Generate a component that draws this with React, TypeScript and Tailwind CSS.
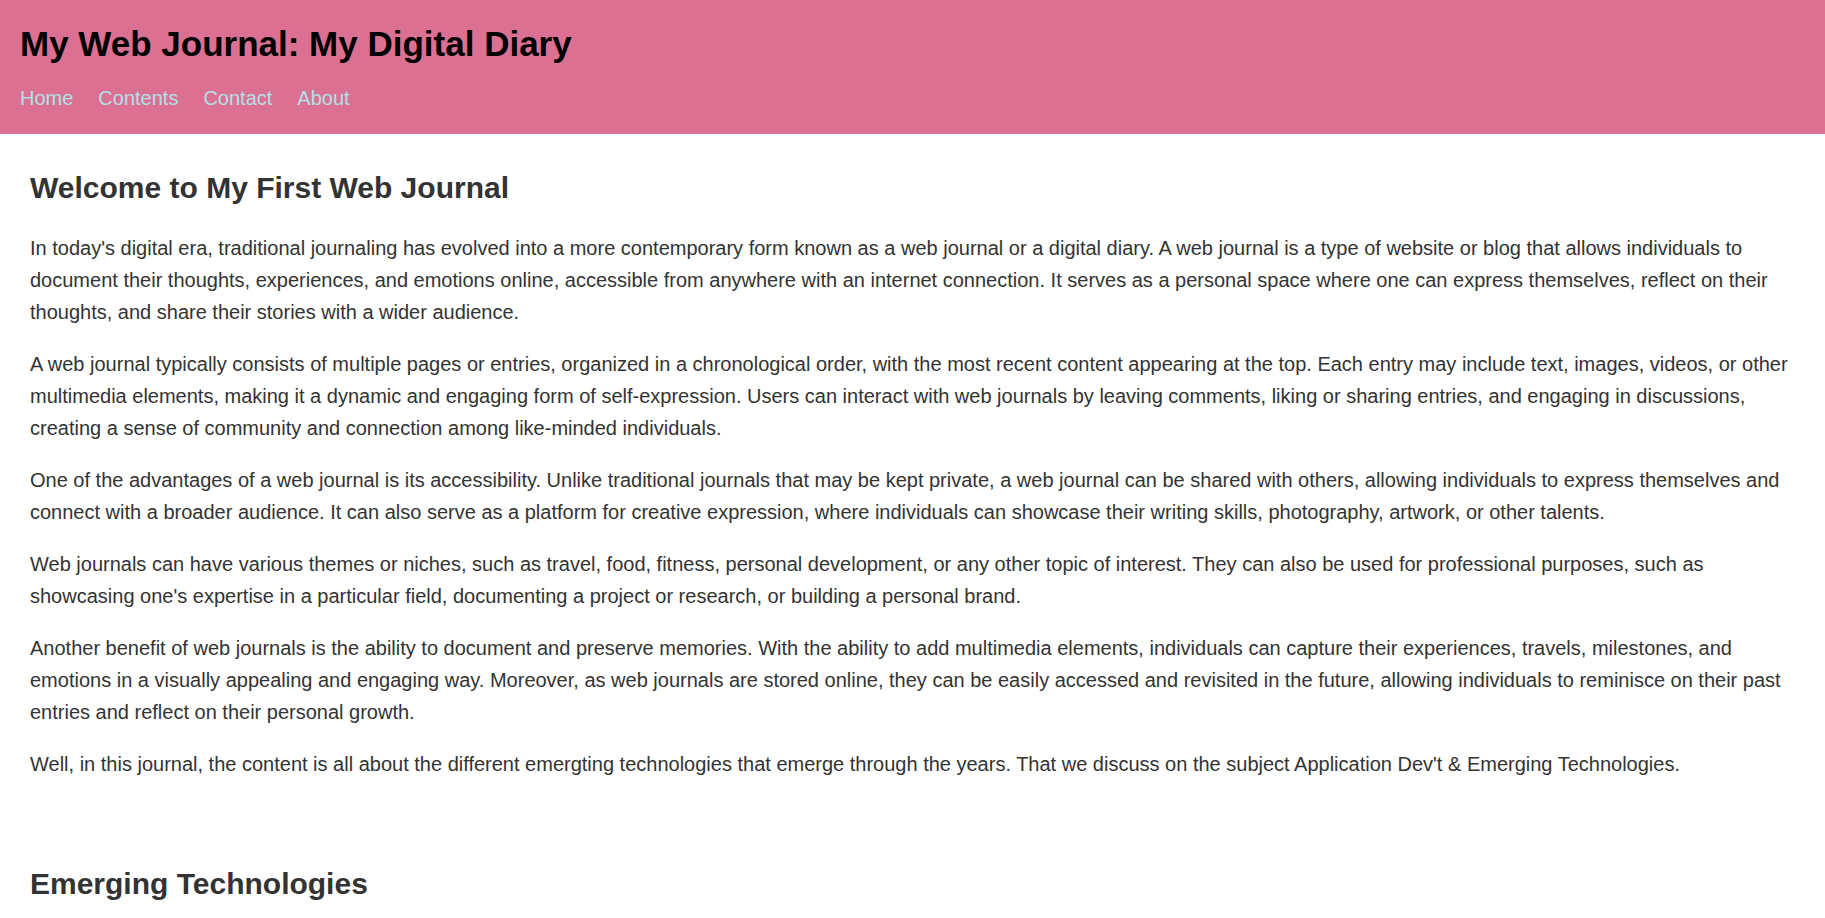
const paragraphs = [
  "In today's digital era, traditional journaling has evolved into a more contemporary form known as a web journal or a digital diary. A web journal is a type of website or blog that allows individuals to document their thoughts, experiences, and emotions online, accessible from anywhere with an internet connection. It serves as a personal space where one can express themselves, reflect on their thoughts, and share their stories with a wider audience.",
  "A web journal typically consists of multiple pages or entries, organized in a chronological order, with the most recent content appearing at the top. Each entry may include text, images, videos, or other multimedia elements, making it a dynamic and engaging form of self-expression. Users can interact with web journals by leaving comments, liking or sharing entries, and engaging in discussions, creating a sense of community and connection among like-minded individuals.",
  "One of the advantages of a web journal is its accessibility. Unlike traditional journals that may be kept private, a web journal can be shared with others, allowing individuals to express themselves and connect with a broader audience. It can also serve as a platform for creative expression, where individuals can showcase their writing skills, photography, artwork, or other talents.",
  "Web journals can have various themes or niches, such as travel, food, fitness, personal development, or any other topic of interest. They can also be used for professional purposes, such as showcasing one's expertise in a particular field, documenting a project or research, or building a personal brand.",
  "Another benefit of web journals is the ability to document and preserve memories. With the ability to add multimedia elements, individuals can capture their experiences, travels, milestones, and emotions in a visually appealing and engaging way. Moreover, as web journals are stored online, they can be easily accessed and revisited in the future, allowing individuals to reminisce on their past entries and reflect on their personal growth.",
  "Well, in this journal, the content is all about the different emergting technologies that emerge through the years. That we discuss on the subject Application Dev't & Emerging Technologies.",
];

const links = ['Home', 'Contents', 'Contact', 'About'];

export default function App() {
  return (
    <div className="min-h-screen bg-white font-['Liberation_Sans',Arial,sans-serif]">
      {/* header */}
      <header className="bg-[#db7093] px-[20px] pt-[24px] pb-[24px]">
        <h1 className="text-[35px] leading-[40px] font-bold text-black">My Web Journal: My Digital Diary</h1>
        <nav className="mt-[23px] flex gap-[25px] text-[20px] leading-[23px]">
          {links.map((l) => (
            <a key={l} href="#" className="text-[#b0e0e6]">
              {l}
            </a>
          ))}
        </nav>
      </header>

      {/* main content */}
      <main className="px-[30px] text-[#333]">
        <section className="pt-[36px]">
          <h2 className="text-[30px] leading-[36px] font-bold mb-[26px]">Welcome to My First Web Journal</h2>
          {paragraphs.map((p, i) => (
            <p key={i} className="text-[20px] leading-[32px] mb-[20px]">
              {p}
            </p>
          ))}
        </section>
        <section className="pt-[66px]">
          <h2 className="text-[30px] leading-[36px] font-bold">Emerging Technologies</h2>
        </section>
      </main>
    </div>
  );
}
